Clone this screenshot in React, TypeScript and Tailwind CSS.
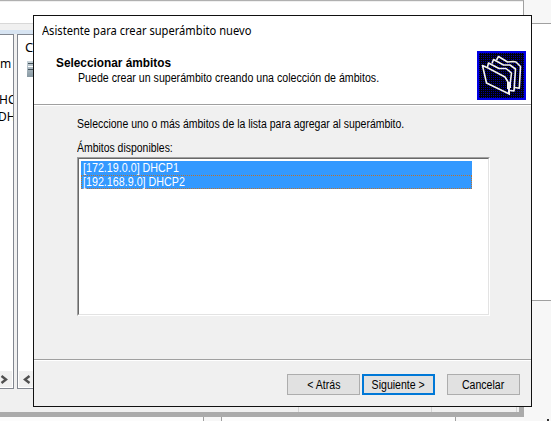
import type { ReactNode } from "react";

function Folders() {
  return (
    <svg width="49" height="49" viewBox="0 0 49 49" shapeRendering="crispEdges" className="block">
      <defs>
        <pattern id="dither" width="2" height="2" patternUnits="userSpaceOnUse">
          <rect width="2" height="2" fill="#000008" />
          <rect width="1" height="1" fill="#0000a0" />
        </pattern>
      </defs>
      <rect width="49" height="49" fill="#0000e4" />
      <rect x="2" y="2" width="45" height="45" fill="url(#dither)" />
      <g fill="url(#dither)" stroke="#f4f4f0" strokeWidth="1.6" strokeLinejoin="round" shapeRendering="auto">
        <path d="M19.5 9 L21.5 5.5 L30.5 11 L36 10.5 L39 11 L43.5 15.5 L42.3 37.3 L38 36.5" />
        <path d="M15 12.5 L16.5 8.5 L26.5 14 L33 14 L38.5 18 L37 40 L33 39.5" />
        <path d="M10.5 16 L11.5 12 L22 17.5 L29 17.5 L34.5 22 L33 34" />
        <path d="M5.5 14.5 L11 17 L28 26 L31 31 L32.3 43 L9.5 32 Z" />
      </g>
      <path d="M29.5 31 L34 31 L33.5 37 L32.5 43.5 L31 42 Z" fill="#f4f4f0" />
    </svg>
  );
}

function Button({ children, focus = false }: { children: ReactNode; focus?: boolean }) {
  return (
    <button
      className={`flex h-[21px] w-[73px] items-center justify-center bg-[#e1e1e1] ${
        focus ? "border-2 border-[#0078d7]" : "border border-[#adadad]"
      }`}
    >
      <span className="inline-block scale-x-[0.88]">{children}</span>
    </button>
  );
}

function Desktop() {
  return (
    <div className="flex h-full w-full">
      <div className="flex w-[524px] flex-col">
        <div className="h-[23px] border-t border-r border-t-[#b0b0b0] border-r-[#a0a0a0] bg-white">
          <div className="h-px bg-[#f0f0f0]" />
        </div>
        <div className="h-[7px] border-t border-[#d8d8d8] bg-[#f0f0f0]" />
        <div className="flex h-[382px] flex-col border-r-[5px] border-[#ababab] bg-[#f0f0f0]">
          <div className="flex h-[359px] gap-[3px] border-t-4 border-[#d7e4f2] font-['Noto_Sans',sans-serif] text-[12px] leading-[17px] text-black">
            <div className="relative w-[14px] overflow-hidden border-y border-r border-[#828790] bg-white">
              <div className="pt-[20px]">m</div>
              <div className="-ml-px pt-[19px]">HC</div>
              <div className="-ml-[2px]">DH</div>
              <div className="absolute bottom-[1px] left-0 flex h-4 w-3 items-center bg-[#f0f0f0]">
                <svg width="9" height="9" fill="none" stroke="#505050" strokeWidth="2.4"><path d="M1.5 1 6 4.5 1.5 8" /></svg>
              </div>
            </div>
            <div className="relative w-[300px] border border-[#828790] bg-white">
              <div className="pt-[4px] pl-[7px] text-[13px]">C</div>
              <div className="absolute top-[26px] left-[9px] flex h-4 w-5 flex-col gap-[2px] bg-linear-to-b from-[#c9d4da] to-[#8798a2] pt-[2px] pl-[1px]">
                <div className="h-px w-full bg-[#44525a]" />
                <div className="h-px w-full bg-white" />
                <div className="h-px w-full bg-[#44525a]" />
              </div>
              <div className="absolute bottom-[1px] left-[1px] flex h-4 w-8 items-center bg-[#f0f0f0] pl-1">
                <svg width="9" height="9" fill="none" stroke="#505050" strokeWidth="2.4"><path d="M6.5 1 2 4.5 6.5 8" /></svg>
              </div>
            </div>
          </div>
          <div className="flex grow items-end">
            <div className="h-[6px] w-[299px] border-r border-[#d4d4d4]" />
            <div className="h-[6px] w-[133px] border-r border-[#d4d4d4]" />
            <div className="h-[6px] w-[85px] border-r border-[#d4d4d4]" />
          </div>
        </div>
        <div className="h-[5px] bg-[#ababab]" />
        <div className="flex grow bg-[#fcfcfc]">
          <div className="w-[204px] border-r border-[#a0a0a0]" />
          <div className="w-[18px] border-r border-[#a0a0a0] bg-[#f7f7f7]" />
          <div className="w-[234px] border-r border-[#a0a0a0]" />
          <div className="grow bg-[#f8f8f8]" />
        </div>
      </div>
      <div className="flex grow flex-col bg-[#f7f7f7]">
        <div className="h-[24px] border-b border-[#a0a0a0]" />
        <div className="h-[277px] border-b border-[#a0a0a0] bg-white" />
        <div className="mt-auto mr-[2px] h-[2px] w-[2px] self-end bg-[#333]" />
      </div>
    </div>
  );
}

export default function App() {
  return (
    <div className="relative h-[421px] w-[551px] overflow-hidden bg-[#f7f7f7]">
      <Desktop />
      <div className="absolute top-[15px] left-[33px] flex h-[392px] w-[499px] flex-col border border-[#111] bg-[#f0f0f0] font-['Liberation_Sans',Arial,sans-serif] text-[12px] leading-[14px] whitespace-nowrap text-black">
        <header className="flex h-[89px] justify-between border-b border-[#a0a0a0] bg-white">
          <div className="w-[400px] pt-[7px] pl-2">
            <div className="origin-left scale-x-[0.928] font-['Noto_Sans',sans-serif] text-[12px] leading-[16px]">Asistente para crear superámbito nuevo</div>
            <h1 className="mt-[17px] ml-[14px] origin-left scale-x-[0.985] font-bold">Seleccionar ámbitos</h1>
            <p className="mt-[1px] ml-9 origin-left scale-x-[0.885]">Puede crear un superámbito creando una colección de ámbitos.</p>
          </div>
          <div className="pt-[35px] pr-[5px]"><Folders /></div>
        </header>
        <main className="h-[255px] border-t border-b border-t-white border-b-[#a0a0a0] pt-[11px] pl-[43px]">
          <p className="origin-left scale-x-[0.873]">Seleccione uno o más ámbitos de la lista para agregar al superámbito.</p>
          <p className="mt-[10px] origin-left scale-x-[0.87]">Ámbitos disponibles:</p>
          <div className="mt-[2px] h-[159px] w-[413px] border border-t-[#a0a0a0] border-r-white border-b-white border-l-[#a0a0a0]">
            <div className="h-full border border-t-[#696969] border-r-[#e3e3e3] border-b-[#e3e3e3] border-l-[#696969] bg-white pt-[2px] pl-[2px] text-white">
              <div className="h-[14px] w-[391px] bg-[#3399ff] pl-[2px]">
                <div className="origin-left scale-x-[0.893]">[172.19.0.0] DHCP1</div>
              </div>
              <div className="h-[14px] w-[391px] border border-dotted border-[#b87333] bg-[#3399ff] pl-[1px] leading-[12px]">
                <div className="origin-left scale-x-[0.893]">[192.168.9.0] DHCP2</div>
              </div>
            </div>
          </div>
        </main>
        <footer className="flex grow border-t border-white pt-[13px] pl-[253px]">
          <Button>&lt; Atrás</Button>
          <div className="ml-[2px]"><Button focus>Siguiente &gt;</Button></div>
          <div className="ml-3"><Button>Cancelar</Button></div>
        </footer>
      </div>
    </div>
  );
}
